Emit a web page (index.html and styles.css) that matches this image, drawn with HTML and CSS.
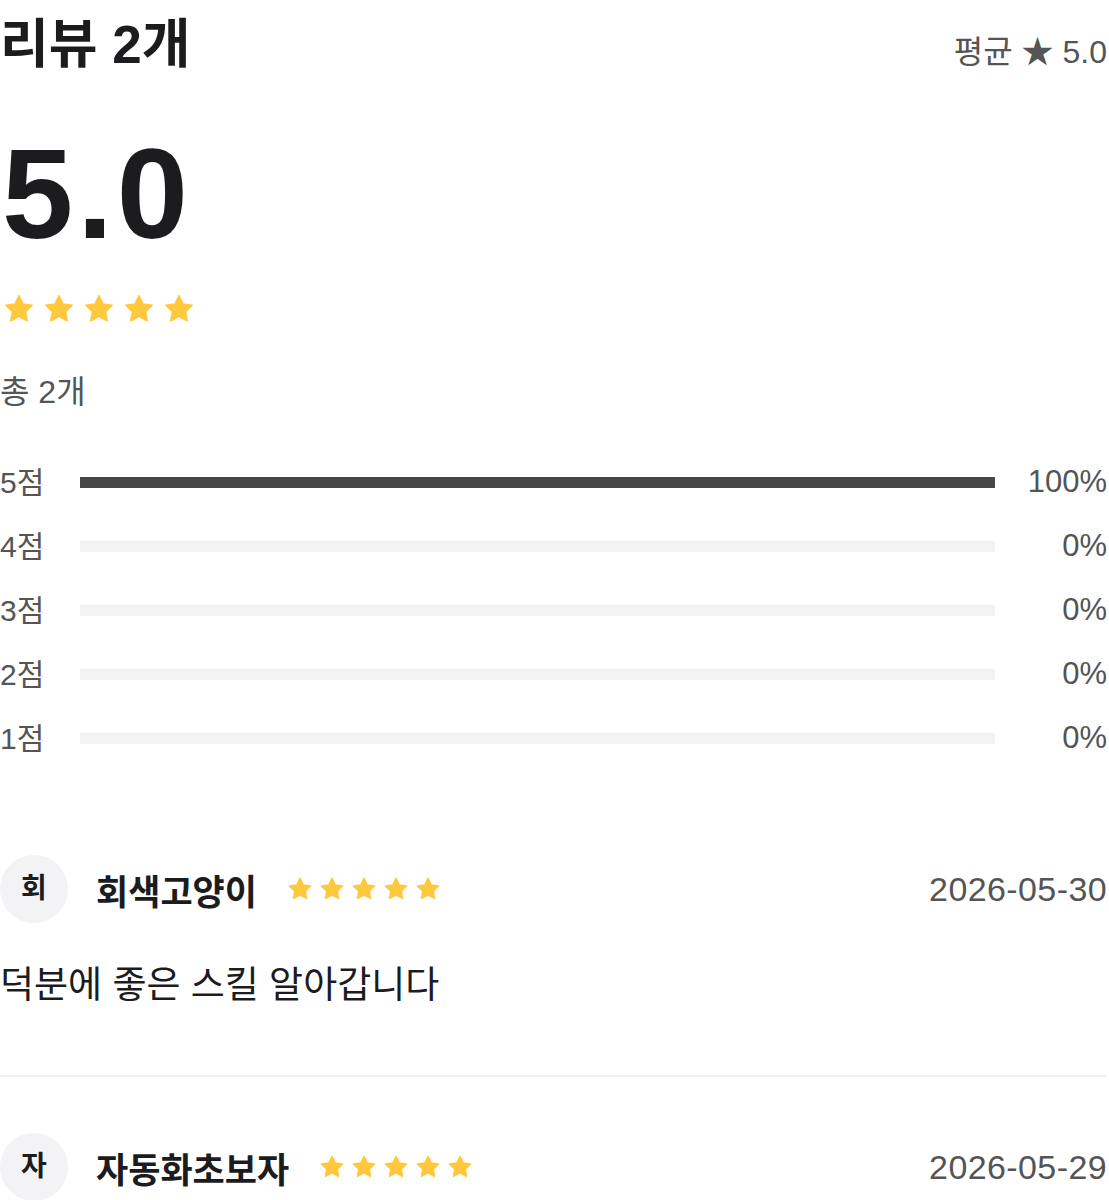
FILE: index.html
```html
<!DOCTYPE html>
<html lang="ko">
<head>
<meta charset="utf-8">
<link rel="stylesheet" href="styles.css">
</head>
<body>
<svg width="0" height="0" class="defs">
  <defs>
    <symbol id="star" viewBox="0 0 24 24">
      <polygon points="12,2.2 14.95,8.4 21.7,9.3 16.8,14 18.05,20.7 12,17.45 5.95,20.7 7.2,14 2.3,9.3 9.05,8.4" fill="#FFC83D" stroke="#FFC83D" stroke-width="1.4" stroke-linejoin="round"/>
    </symbol>
  </defs>
</svg>
<main class="reviews">
  <header class="head">
    <h1 class="title">리뷰 2개</h1>
    <div class="avg">평균 ★ 5.0</div>
  </header>

  <section class="summary">
    <div class="score">5.0</div>
    <div class="stars big">
      <svg><use href="#star"/></svg><svg><use href="#star"/></svg><svg><use href="#star"/></svg><svg><use href="#star"/></svg><svg><use href="#star"/></svg>
    </div>
    <div class="total">총 2개</div>
  </section>

  <section class="dist">
    <div class="row"><span class="lbl">5점</span><div class="track"><div class="fill" style="width:100%"></div></div><span class="pct">100%</span></div>
    <div class="row"><span class="lbl">4점</span><div class="track"><div class="fill" style="width:0%"></div></div><span class="pct">0%</span></div>
    <div class="row"><span class="lbl">3점</span><div class="track"><div class="fill" style="width:0%"></div></div><span class="pct">0%</span></div>
    <div class="row"><span class="lbl">2점</span><div class="track"><div class="fill" style="width:0%"></div></div><span class="pct">0%</span></div>
    <div class="row"><span class="lbl">1점</span><div class="track"><div class="fill" style="width:0%"></div></div><span class="pct">0%</span></div>
  </section>

  <article class="review">
    <div class="meta">
      <div class="avatar">회</div>
      <div class="name">회색고양이</div>
      <div class="stars small">
        <svg><use href="#star"/></svg><svg><use href="#star"/></svg><svg><use href="#star"/></svg><svg><use href="#star"/></svg><svg><use href="#star"/></svg>
      </div>
      <div class="date">2026-05-30</div>
    </div>
    <p class="body">덕분에 좋은 스킬 알아갑니다</p>
  </article>

  <article class="review">
    <div class="meta">
      <div class="avatar">자</div>
      <div class="name">자동화초보자</div>
      <div class="stars small">
        <svg><use href="#star"/></svg><svg><use href="#star"/></svg><svg><use href="#star"/></svg><svg><use href="#star"/></svg><svg><use href="#star"/></svg>
      </div>
      <div class="date">2026-05-29</div>
    </div>
  </article>
</main>
</body>
</html>
```

FILE: styles.css
```css
* { box-sizing: border-box; }
html, body { margin: 0; padding: 0; background: #fff; }
body {
  font-family: "Liberation Sans", "Noto Sans CJK KR", sans-serif;
  color: #1c1c1e;
}
.defs { position: absolute; width: 0; height: 0; overflow: hidden; }

.reviews { width: 1109px; padding: 0 2px 0 0; }

.head {
  display: flex;
  justify-content: space-between;
  align-items: center;
  height: 88px;
}
.title {
  margin: 0;
  font-size: 53px;
  font-weight: 700;
  line-height: 1;
}
.avg {
  font-size: 32px;
  color: #555;
  margin-top: 10px;
}

.summary { padding-top: 42px; }
.score {
  font-size: 128px;
  font-weight: 700;
  line-height: 1;
  letter-spacing: 4px;
  color: #1c1c1e;
  margin-left: 2px;
}
.stars { display: flex; }
.stars.big { margin-top: 35px; gap: 8px; margin-left: 3px; }
.stars.big svg { width: 32px; height: 32px; }
.total {
  margin-top: 51px;
  font-size: 32px;
  color: #555;
  line-height: 1;
}

.dist { margin-top: 54px; display: flex; flex-direction: column; gap: 24px; }
.row {
  display: flex;
  align-items: center;
  height: 40px;
}
.lbl { width: 80px; font-size: 30px; color: #555; padding-bottom: 5px; }
.track { flex: 1; height: 11px; background: #f3f3f5; }
.fill { height: 100%; background: #464648; }
.pct { width: 112px; text-align: right; font-size: 31px; color: #555; }

.review { padding-top: 97px; }
.review + .review { border-top: 2px solid #f1f1f3; padding-top: 56px; margin-top: 65px; }
.meta { display: flex; align-items: center; }
.avatar {
  width: 68px; height: 68px; border-radius: 50%;
  background: #f3f3f5;
  display: flex; align-items: center; justify-content: center;
  font-size: 28px; font-weight: 700; color: #1c1c1e;
  padding-bottom: 6px;
}
.name {
  margin-left: 28px;
  font-size: 35px; font-weight: 700;
}
.stars.small { margin-left: 30px; gap: 6px; }
.stars.small svg { width: 26px; height: 26px; }
.date { margin-left: auto; font-size: 34px; letter-spacing: 0.4px; color: #555; }
.body { margin: 39px 0 0; font-size: 37px; color: #1c1c1e; line-height: 1.3; }
```
